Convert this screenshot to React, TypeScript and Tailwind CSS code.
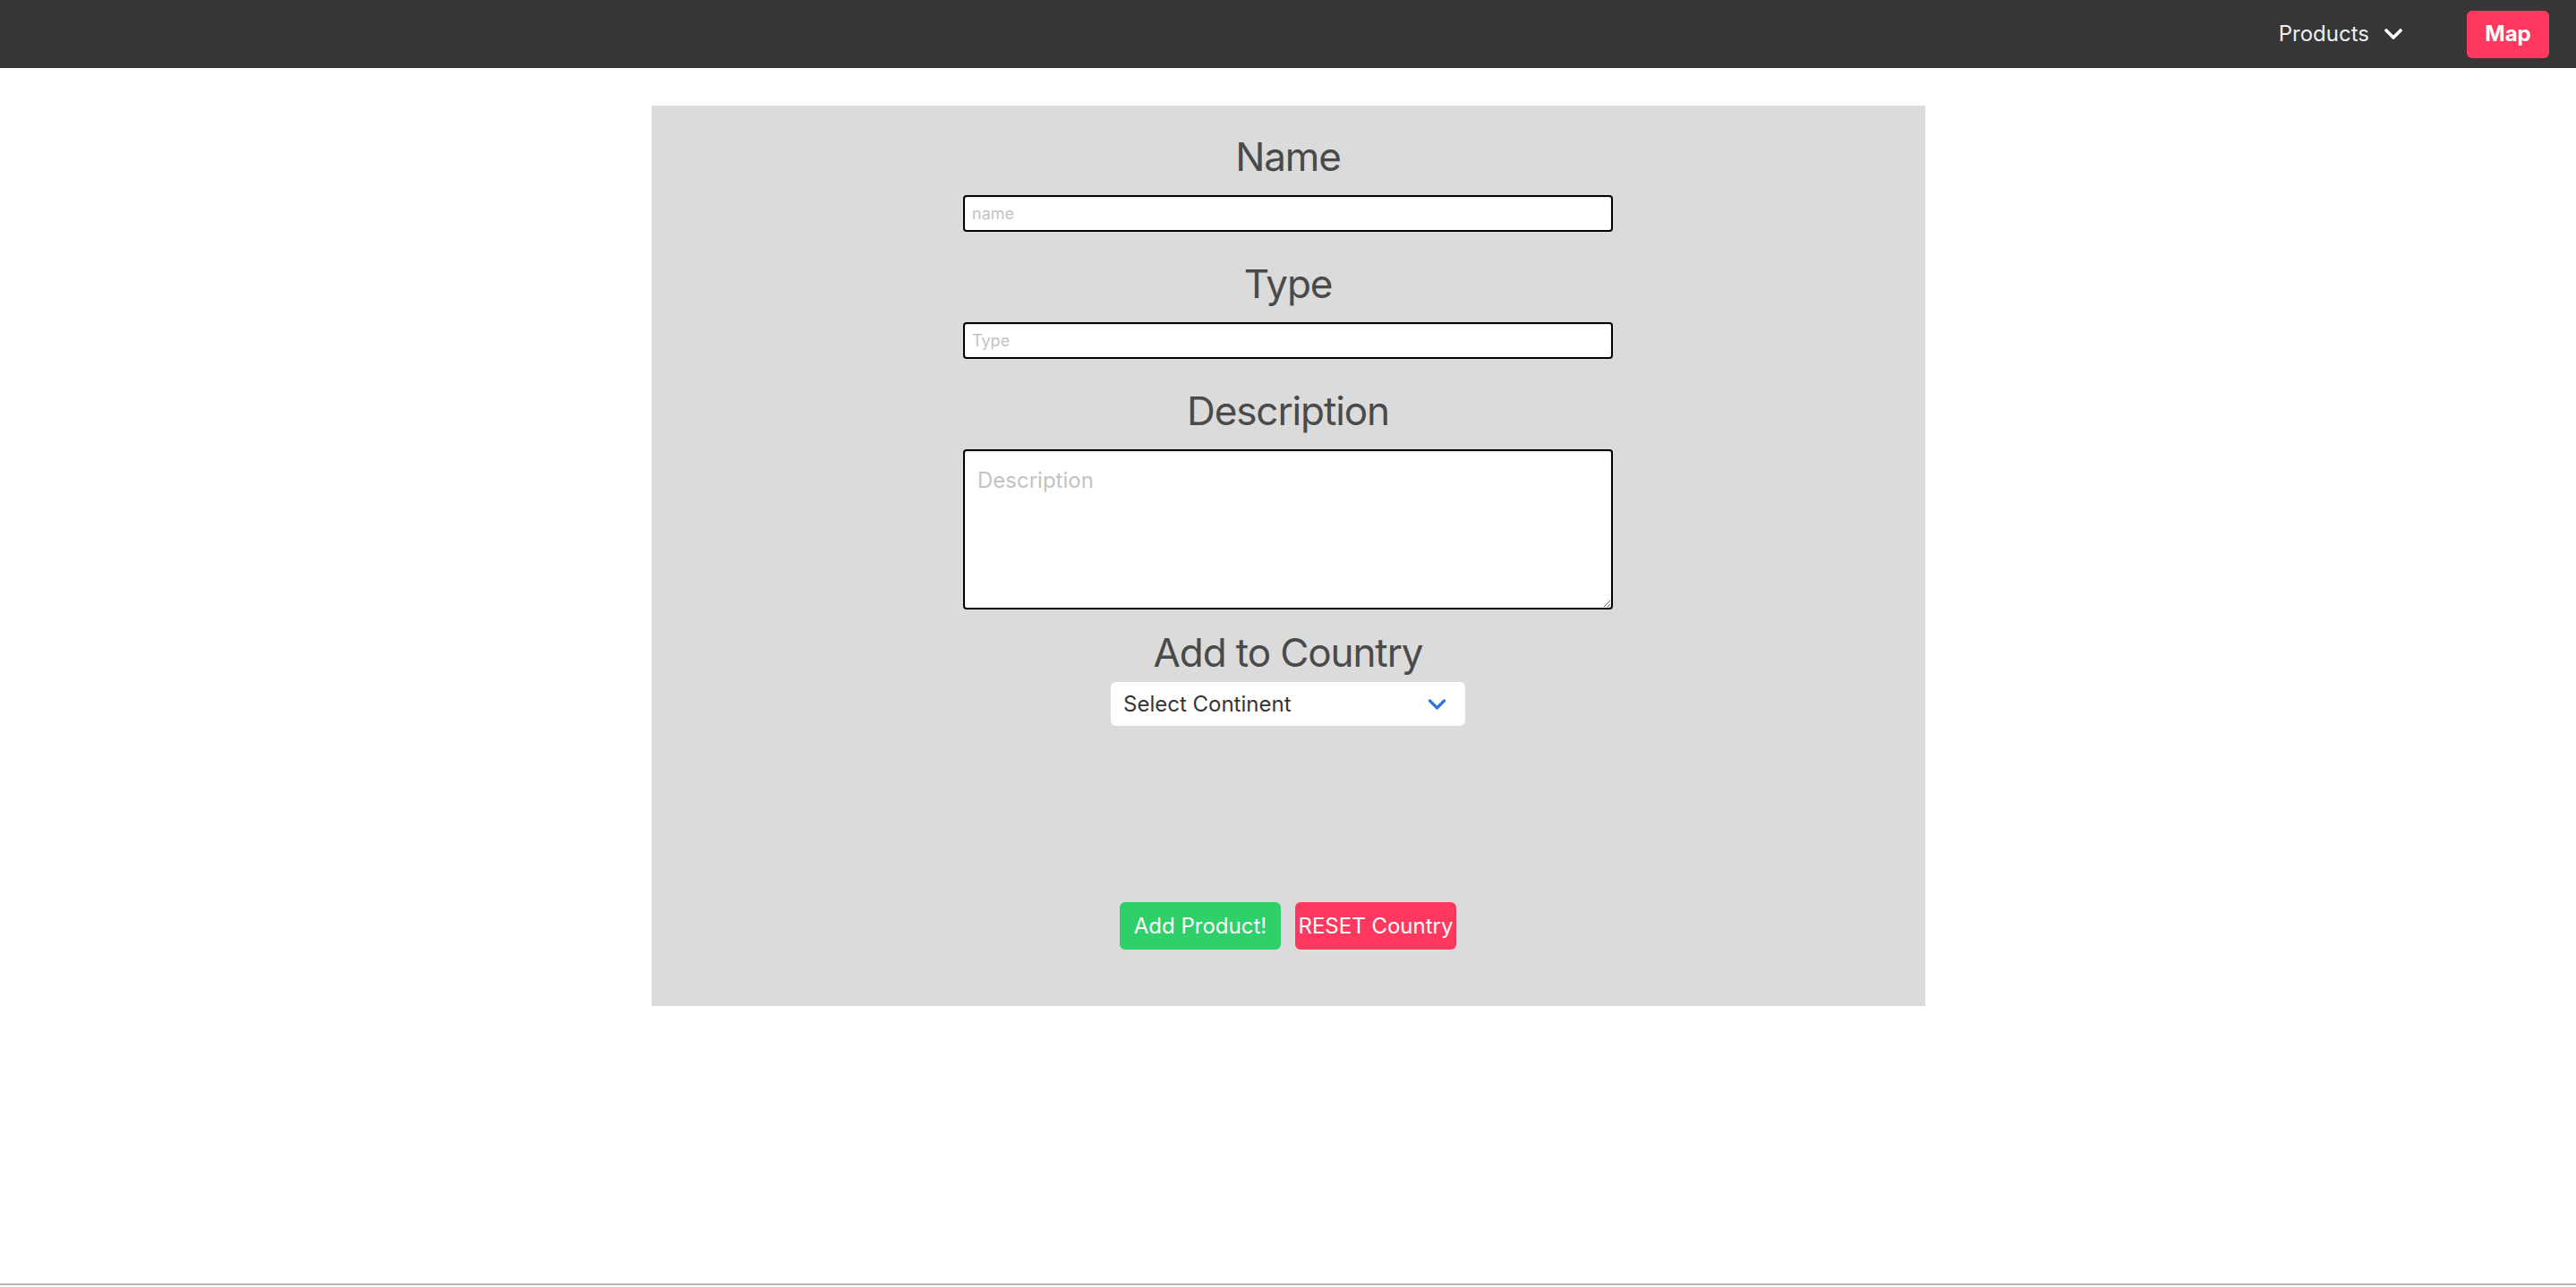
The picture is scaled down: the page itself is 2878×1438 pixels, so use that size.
import React from 'react';

const Chevron = ({ className, width = 3.2 }: { className?: string; width?: number }) => (
  <svg
    viewBox="0 0 20 12"
    className={className}
    fill="none"
    stroke="currentColor"
    strokeWidth={width}
    strokeLinecap="round"
    strokeLinejoin="round"
  >
    <polyline points="2,2 10,10 18,2" />
  </svg>
);

const Heading = ({ children, className = '' }: { children: React.ReactNode; className?: string }) => (
  <h2 className={`text-[44px] leading-[44px] tracking-tight text-[#4a4a4a] ${className}`}>{children}</h2>
);

const inputClass =
  'w-[726px] h-[41px] border-2 border-black rounded-[4px] bg-white px-2 text-[18px] text-[#363636] shadow-[inset_0_1px_2px_rgba(10,10,10,0.1)] placeholder:text-[#c3c3c3] outline-none';

const App = () => {
  return (
    <div className="min-h-screen flex flex-col bg-white font-['Inter',sans-serif]">
      <nav className="h-[76px] bg-[#363636] flex items-center justify-end pr-[30px]">
        <div className="flex items-center text-[24px] text-[#eeeeee] cursor-pointer">
          <span>Products</span>
          <Chevron className="ml-[17px] w-[20px] h-[12px] text-white" width={3.6} />
        </div>
        <button className="ml-[72px] w-[92px] h-[53px] rounded-[6px] bg-[#ff3860] text-white text-[24px] font-bold">
          Map
        </button>
      </nav>

      <main className="flex-1 pt-[42px]">
        <div className="w-[1423px] mx-auto bg-[#dbdbdb] flex flex-col items-center pt-[35px] pb-[63px]">
          <Heading>Name</Heading>
          <input className={`${inputClass} mt-[21px]`} placeholder="name" />

          <Heading className="mt-[36px]">Type</Heading>
          <input className={`${inputClass} mt-[21px]`} placeholder="Type" />

          <Heading className="mt-[36px]">Description</Heading>
          <textarea
            className="mt-[21px] w-[726px] h-[179px] border-2 border-black rounded-[4px] bg-white px-[14px] pt-[15px] text-[24px] leading-[1.5] text-[#363636] shadow-[inset_0_1px_2px_rgba(10,10,10,0.1)] placeholder:text-[#c3c3c3] outline-none"
            placeholder="Description"
          />

          <Heading className="mt-[26px]">Add to Country</Heading>
          <div className="relative mt-[11px] w-[396px] h-[49px]">
            <select className="appearance-none w-full h-full rounded-[6px] bg-white pl-[14px] text-[24px] text-[#363636] outline-none cursor-pointer">
              <option>Select Continent</option>
              <option>Africa</option>
              <option>Asia</option>
              <option>Europe</option>
              <option>North America</option>
              <option>Oceania</option>
              <option>South America</option>
            </select>
            <Chevron className="absolute right-[21px] top-1/2 -translate-y-1/2 w-[21px] h-[12px] text-[#3273dc] pointer-events-none" />
          </div>

          <div className="mt-[197px] flex gap-4">
            <button className="w-[180px] h-[53px] rounded-[6px] bg-[#2fd06a] text-white text-[24px] whitespace-nowrap">
              Add Product!
            </button>
            <button className="w-[180px] h-[53px] rounded-[6px] bg-[#ff3860] text-white text-[24px] whitespace-nowrap">
              RESET Country
            </button>
          </div>
        </div>
      </main>

      <div className="h-[2px] bg-[#b5b5b5]" />
      <div className="h-[2px]" />
    </div>
  );
};

export default App;
